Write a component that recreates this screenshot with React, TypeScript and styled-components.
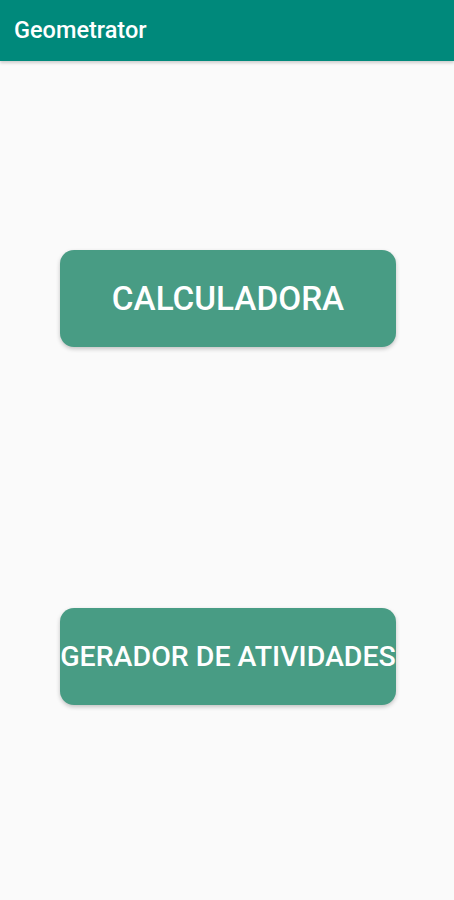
import React from "react";
import styled, { createGlobalStyle } from "styled-components";

const GlobalStyle = createGlobalStyle`
  html, body {
    margin: 0;
    padding: 0;
    background: #fafafa;
    font-family: Roboto, "Noto Sans", sans-serif;
  }
`;

const Screen = styled.div`
  width: 454px;
  height: 900px;
  background: #fafafa;
  display: flex;
  flex-direction: column;
`;

const AppBar = styled.header`
  height: 61px;
  background: #00897b;
  display: flex;
  align-items: center;
  padding: 0 14px;
  box-shadow: 0 2px 3px rgba(0, 0, 0, 0.18);
  box-sizing: border-box;
`;

const Title = styled.h1`
  margin: 0;
  margin-top: -2px;
  color: #ffffff;
  font-size: 23.5px;
  font-weight: 500;
`;

const Content = styled.main`
  display: flex;
  flex-direction: column;
  align-items: center;
  padding-top: 189px;
  padding-left: 2px;
  gap: 261px;
`;

const MenuButton = styled.button<{ $size: number }>`
  width: 336px;
  height: 97px;
  border: none;
  border-radius: 14px;
  background: #489c84;
  color: #ffffff;
  font-family: Roboto, "Noto Sans", sans-serif;
  font-size: ${(p) => p.$size}px;
  font-weight: 500;
  padding: 0;
  white-space: nowrap;
  display: flex;
  align-items: center;
  justify-content: center;
  box-shadow: 0 2px 4px rgba(0, 0, 0, 0.22);
  cursor: pointer;
`;

export default function App() {
  return (
    <Screen>
      <GlobalStyle />
      <AppBar>
        <Title>Geometrator</Title>
      </AppBar>
      <Content>
        <MenuButton $size={33.3}>CALCULADORA</MenuButton>
        <MenuButton $size={28.5}>GERADOR DE ATIVIDADES</MenuButton>
      </Content>
    </Screen>
  );
}
